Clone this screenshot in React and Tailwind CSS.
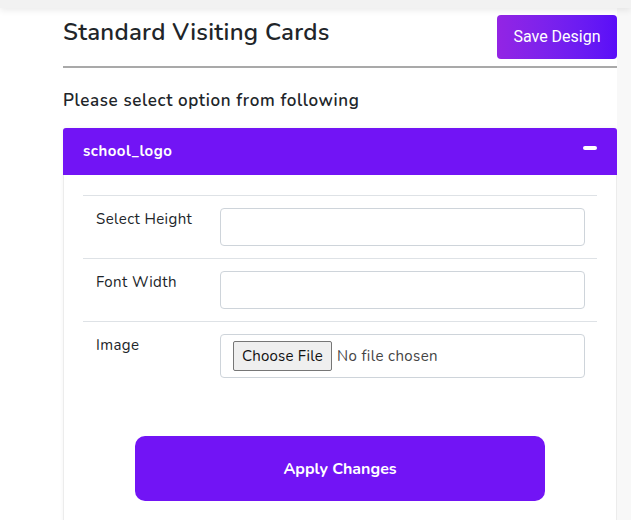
import React from "react";

export default function App() {
  const font = { fontFamily: '"Nunito", "Noto Sans", "Open Sans", sans-serif' };
  return (
    <div className="w-[631px] h-[520px] overflow-hidden bg-white relative" style={font}>
      <div className="h-[8px] bg-[#f2f2f2] shadow-[0_2px_7px_rgba(0,0,0,0.09)] relative z-10" />
      <div className="flex">
        <div className="w-[617px] pl-[63px]">
          <div className="flex justify-between items-start pt-[7px]">
            <h1 className="text-[24px] leading-[28px] font-semibold text-[#212529] mt-[3px] tracking-[0.28px]">
              Standard Visiting Cards
            </h1>
            <button
              className="w-[120px] h-[44px] rounded-[4px] text-white text-[16px] bg-gradient-to-r from-[#9324e4] to-[#5a0df8]"
              style={{ fontFamily: 'Roboto, "Noto Sans", sans-serif' }}
            >
              Save Design
            </button>
          </div>
          <div className="h-[2px] bg-[#a9a9a9] mt-[7px]" />
          <h2 className="text-[17px] leading-[24px] font-semibold text-[#212529] mt-[21px] tracking-[0.62px]">
            Please select option from following
          </h2>
          <div className="mt-[15px] rounded-t-[3px] border-x border-[#ececec] shadow-[0_0_4px_rgba(0,0,0,0.05)]">
            <div className="h-[47px] bg-[#7214f5] flex items-center justify-between px-[20px] -mx-px rounded-t-[3px]">
              <span className="text-white font-bold text-[15px] tracking-[0.5px]">school_logo</span>
              <span className="block w-[14px] h-[3.5px] bg-white rounded-full -mt-[7px]" />
            </div>
            <div className="bg-white px-[19px] pt-[20px] pb-[40px]">
              <div className="border-t border-[#dee2e6]">
                {["Select Height", "Font Width"].map((l) => (
                  <div key={l} className="flex border-b border-[#dee2e6] py-[12px]">
                    <div className="w-[137px] pl-[13px] text-[15px] leading-[24px] text-[#212529] tracking-[0.4px] -mt-[1px]">{l}</div>
                    <div className="flex-1 pr-[12px]">
                      <div className="h-[38px] border border-[#ced4da] rounded-[4px] bg-white" />
                    </div>
                  </div>
                ))}
                <div className="flex py-[12px]">
                  <div className="w-[137px] pl-[13px] text-[15px] leading-[24px] text-[#212529] tracking-[0.4px] -mt-[1px]">Image</div>
                  <div className="flex-1 pr-[12px]">
                    <div className="h-[44px] border border-[#ced4da] rounded-[4px] bg-white flex items-center pl-[12px]">
                      <span className="h-[30px] px-[8px] border border-[#767676] rounded-[2px] bg-[#efefef] text-[15px] text-[#111] flex items-center tracking-[0.2px]">
                        Choose File
                      </span>
                      <span className="ml-[5px] text-[15px] text-[#444] tracking-[0.4px]">No file chosen</span>
                    </div>
                  </div>
                </div>
              </div>
              <div className="flex justify-center mt-[46px]">
                <button className="w-[410px] h-[65px] rounded-[10px] bg-[#7214f5] text-white font-bold text-[16px]">
                  Apply Changes
                </button>
              </div>
            </div>
          </div>
        </div>
        <div className="flex-1 bg-[#f8f8f8]" />
      </div>
    </div>
  );
}
